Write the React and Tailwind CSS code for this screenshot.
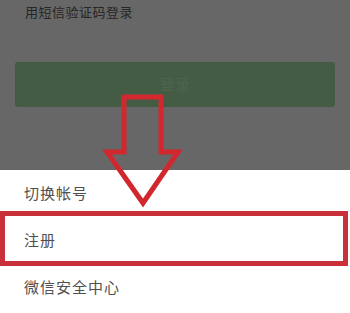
export default function App() {
  const font = { fontFamily: '"Noto Sans CJK SC", "Noto Sans", sans-serif' };

  return (
    <div className="relative h-[313px] w-[350px] overflow-hidden bg-white" style={font}>
      {/* Dimmed login page */}
      <div className="h-[170px] bg-[#676767] px-[15px]">
        <p className="pl-[10px] pt-[3px] text-[13px] leading-[18px] tracking-[0.5px] text-[#262626]">
          用短信验证码登录
        </p>
        <div className="mt-[41px] flex h-[45px] items-center justify-center rounded-[3px] bg-[#445c44]">
          <span className="text-[15px] text-[#4c654c]">登录</span>
        </div>
      </div>

      {/* Action sheet */}
      <div className="flex flex-col">
        {["切换帐号", "注册", "微信安全中心"].map((t) => (
          <div key={t} className="flex h-[47px] items-center pl-[24px] text-[15px] tracking-[1px] text-[#505050]">
            {t}
          </div>
        ))}
      </div>

      {/* Annotation: highlight box */}
      <div className="absolute left-0 top-[211px] h-[55px] w-[348px] border-[5px] border-[#c9303a]" />

      {/* Annotation: arrow */}
      <svg className="absolute left-0 top-0" width="350" height="313" viewBox="0 0 350 313">
        <polygon
          points="124,97 161,97 161,152 178,152 143,203 107,152 124,152"
          fill="none"
          stroke="#d1282f"
          strokeWidth="5"
          strokeLinejoin="miter"
        />
      </svg>
    </div>
  );
}
